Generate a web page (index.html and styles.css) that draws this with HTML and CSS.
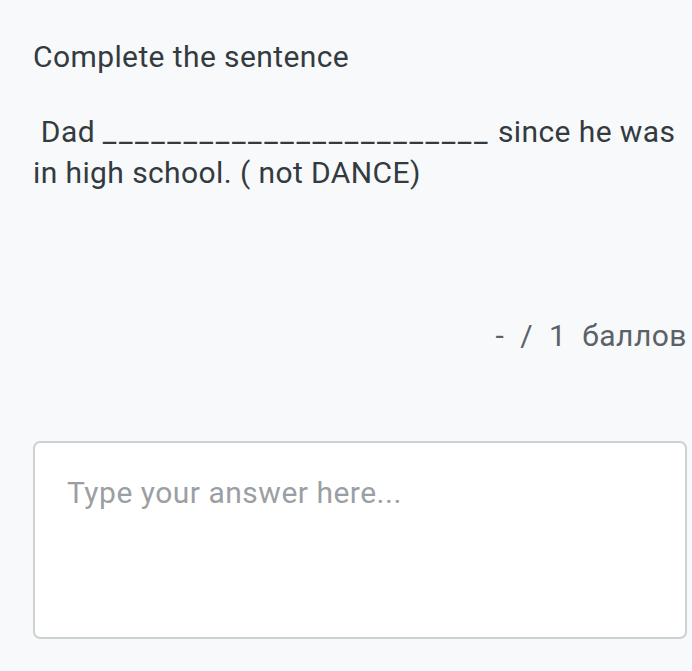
FILE: index.html
```html
<!DOCTYPE html>
<html>
<head>
<meta charset="utf-8">
<link rel="stylesheet" href="styles.css">
</head>
<body>
<div class="page">
  <h1 class="title">Complete the sentence</h1>
  <p class="question">&nbsp;Dad <span class="blank">________________________</span> since he was in high school. ( not DANCE)</p>
  <div class="score">-&nbsp; /&nbsp; 1&nbsp; баллов</div>
  <div class="answer">Type your answer here...</div>
</div>
</body>
</html>
```
FILE: styles.css
```css
html, body {
  margin: 0;
  padding: 0;
  background: #f8f9fb;
}
body {
  font-family: Roboto, "Noto Sans", sans-serif;
  color: #343b40;
}
.page {
  padding: 37px 5px 0 33px;
  display: flex;
  flex-direction: column;
}
.title {
  margin: 0;
  font-size: 30px;
  font-weight: 400;
  letter-spacing: 0.4px;
  line-height: 40px;
}
.question {
  margin: 34px 0 0 0;
  font-size: 30px;
  letter-spacing: 0.4px;
  line-height: 41px;
}
.blank {
  letter-spacing: 2.6px;
}
.score {
  margin-top: 124px;
  align-self: flex-end;
  font-size: 30px;
  letter-spacing: 0.5px;
  color: #5a6267;
  line-height: 38px;
}
.answer {
  margin-top: 86px;
  height: 198px;
  box-sizing: border-box;
  background: #fff;
  border: 2px solid #ccd1d4;
  border-radius: 7px;
  padding: 31px 32px;
  font-size: 30px;
  letter-spacing: 0.5px;
  line-height: 38px;
  color: #9b9fa3;
}
```
